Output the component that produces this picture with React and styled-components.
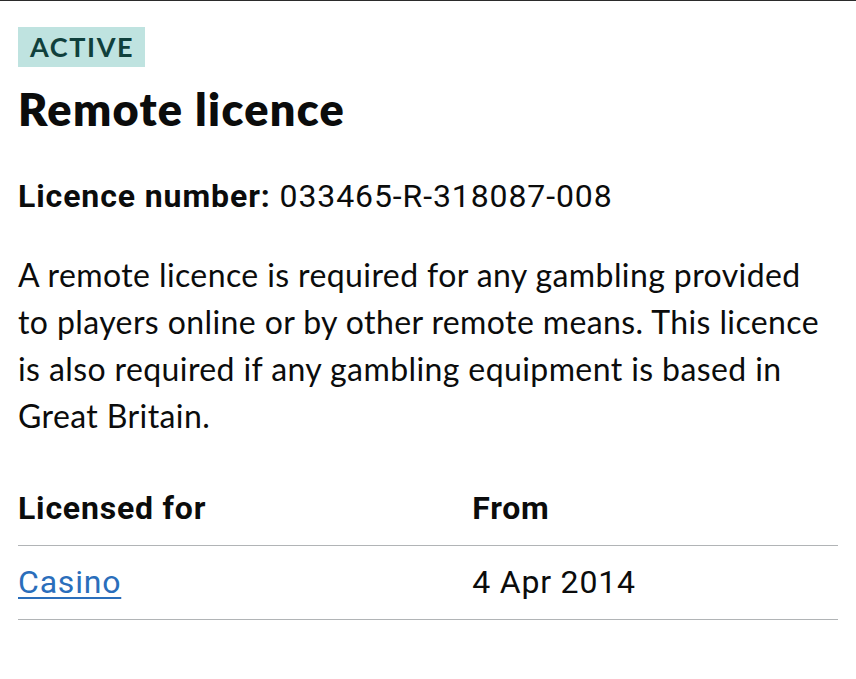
import React from "react";
import styled, { createGlobalStyle } from "styled-components";

const GlobalStyle = createGlobalStyle`
  body {
    margin: 0;
    background: #fff;
    color: #0b0c0c;
    font-family: Lato, "Noto Sans", sans-serif;
  }
`;

const Page = styled.main`
  border-top: 1px solid #2b2b2b;
  padding: 26px 18px 40px;
`;

const Badge = styled.strong`
  display: inline-block;
  background: #bfe3e0;
  color: #10403c;
  font-family: Lato, sans-serif;
  font-weight: 700;
  font-size: 27px;
  letter-spacing: 1.6px;
  line-height: 40px;
  padding: 0 11px 0 12px;
`;

const Title = styled.h1`
  margin: 14px 0 0;
  font-family: Lato, sans-serif;
  font-weight: 800;
  font-size: 45px;
  letter-spacing: 1.3px;
  line-height: 56px;
`;

const Number = styled.p`
  margin: 39px 0 0;
  font-family: Roboto, sans-serif;
  font-size: 32px;
  letter-spacing: 0.9px;
  line-height: 40px;

  b {
    font-weight: 700;
  }
`;

const Text = styled.p`
  margin: 35px 0 0;
  font-size: 32px;
  letter-spacing: 0.4px;
  line-height: 47px;
`;

const Table = styled.table`
  margin-top: 51px;
  width: 100%;
  border-collapse: collapse;
  font-family: Roboto, sans-serif;
  font-size: 32px;
  letter-spacing: 0.8px;
  line-height: 36px;
`;

const Th = styled.th`
  text-align: left;
  font-weight: 700;
  padding: 0 0 19px;
  border-bottom: 1px solid #b1b4b6;
  width: ${(p) => p.w || "auto"};
`;

const Td = styled.td`
  padding: 18px 0 19px;
  border-bottom: 1px solid #b1b4b6;
`;

const Link = styled.a`
  color: #2a6ebb;
  text-decoration: underline;
  text-decoration-thickness: 2px;
  text-underline-offset: 4px;
`;

export default function App() {
  return (
    <>
      <GlobalStyle />
      <Page>
        <Badge>ACTIVE</Badge>
        <Title>Remote licence</Title>
        <Number>
          <b>Licence number:</b> 033465-R-318087-008
        </Number>
        <Text>
          A remote licence is required for any gambling provided to players
          online or by other remote means. This licence is also required if
          any gambling equipment is based in Great Britain.
        </Text>
        <Table>
          <thead>
            <tr>
              <Th w="55.4%">Licensed for</Th>
              <Th>From</Th>
            </tr>
          </thead>
          <tbody>
            <tr>
              <Td>
                <Link href="#">Casino</Link>
              </Td>
              <Td>4 Apr 2014</Td>
            </tr>
          </tbody>
        </Table>
      </Page>
    </>
  );
}
